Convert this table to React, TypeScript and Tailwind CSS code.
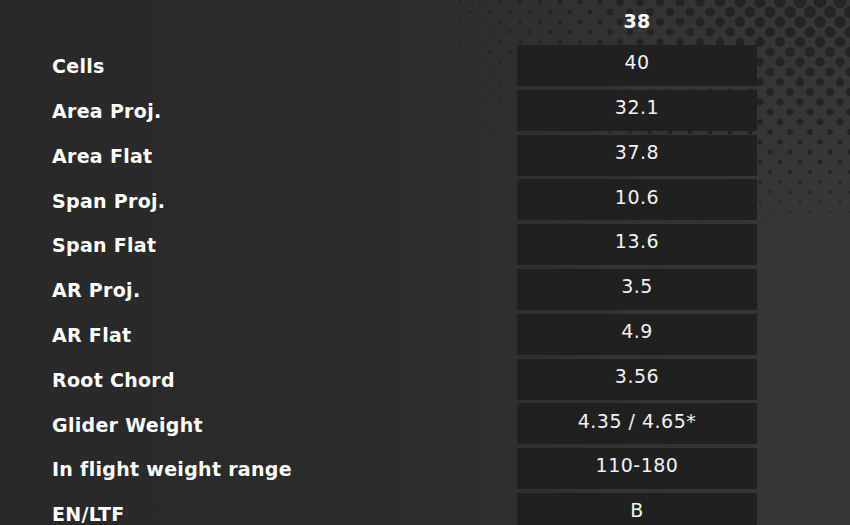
const rows: [string, string][] = [
  ['Cells', '40'],
  ['Area Proj.', '32.1'],
  ['Area Flat', '37.8'],
  ['Span Proj.', '10.6'],
  ['Span Flat', '13.6'],
  ['AR Proj.', '3.5'],
  ['AR Flat', '4.9'],
  ['Root Chord', '3.56'],
  ['Glider Weight', '4.35 / 4.65*'],
  ['In flight weight range', '110-180'],
  ['EN/LTF', 'B'],
];

function Dots() {
  const dots: { x: number; y: number; r: number }[] = [];
  for (let row = 0; row < 24; row++) {
    const y = row * 10 + 2;
    const offset = row % 2 === 0 ? 0 : 10;
    for (let col = 0; col < 26; col++) {
      const x = 340 + col * 20 + offset;
      const fx = Math.min(1, Math.max(0, (x - 360) / 440));
      const fy = Math.max(0, 1 - y / 230);
      const r = 5 * fx * fy + (fx > 0.55 ? 1.2 * fx * Math.max(0, 1 - y / 480) : 0);
      if (r > 0.6) dots.push({ x, y, r });
    }
  }
  return (
    <svg
      className="pointer-events-none absolute left-0 top-0"
      width="850"
      height="260"
      viewBox="0 0 850 260"
    >
      {dots.map((d, i) => (
        <circle key={i} cx={d.x} cy={d.y} r={d.r} fill="#1c1c1c" opacity="0.7" />
      ))}
    </svg>
  );
}

export default function App() {
  return (
    <div className="relative h-[525px] w-[850px] overflow-hidden bg-[linear-gradient(90deg,#292929_0%,#2b2b2b_45%,#333333_75%,#373737_100%)] font-['DejaVu_Sans',sans-serif] text-white">
      <Dots />
      <div className="relative">
        <div className="flex h-[45px] items-center">
          <div className="w-[517px]" />
          <div className="w-[240px] pb-[2px] text-center text-[19px] font-bold tracking-[0.3px]">
            38
          </div>
        </div>
        <div className="flex flex-col gap-[3.8px]">
          {rows.map(([label, value]) => (
            <div key={label} className="flex h-[41px] items-center">
              <div className="w-[517px] pl-[52px] pt-[2px] text-[19px] font-bold tracking-[0.3px]">
                {label}
              </div>
              <div className="flex h-full w-[240px] items-center justify-center bg-[#202020] pb-[6px] text-[19px] tracking-[0.5px] text-[#f2f2f2]">
                {value}
              </div>
            </div>
          ))}
        </div>
      </div>
    </div>
  );
}
